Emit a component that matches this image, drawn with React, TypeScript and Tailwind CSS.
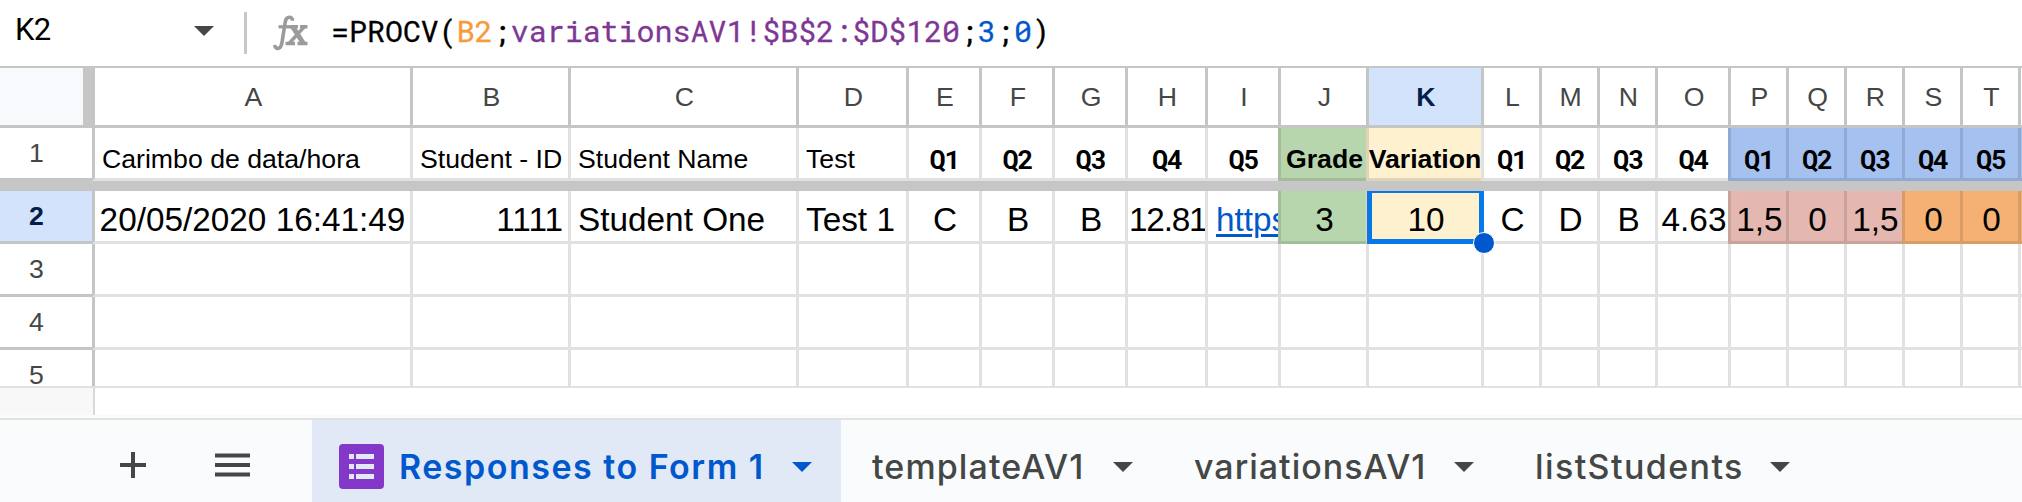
import React from "react";

type Cell = { t?: string; bg?: string; cls?: string };

const COLS = "grid grid-cols-[318px_158px_228px_110px_73px_73px_73px_80px_73px_88px_115px_58px_58px_58px_73px_58px_58px_58px_58px_58px_4px]";
const LETTERS = "ABCDEFGHIJKLMNOPQRST".split("");

const PLAIN = "bg-white border-[#e1e1e1]";
const GREEN = "bg-[#b8d6ae] border-[#a3bc9a]";
const CREAM = "bg-[#fef1d0] border-[#e0d4b8]";
const BLUE = "bg-[#a5c1f0] border-[#91aad4]";
const ROSE = "bg-[#e4b8b0] border-[#c9a29c]";
const ORANGE = "bg-[#f5b174] border-[#d89c67]";

const Q = "justify-center pl-px font-['Roboto_Mono','DejaVu_Sans_Mono',monospace] font-bold text-[22px] tracking-[-1px]";
const LEFT = "pl-[7px]";
const MID = "justify-center pl-0.5";

const row1: Cell[] = [
  { t: "Carimbo de data/hora", cls: LEFT },
  { t: "Student - ID", cls: LEFT },
  { t: "Student Name", cls: LEFT },
  { t: "Test", cls: LEFT },
  { t: "Q1", cls: Q },
  { t: "Q2", cls: Q },
  { t: "Q3", cls: Q },
  { t: "Q4", cls: Q },
  { t: "Q5", cls: Q },
  { t: "Grade", cls: "justify-center pl-0.5 font-bold", bg: GREEN },
  { t: "Variation", cls: "justify-center font-bold", bg: CREAM },
  { t: "Q1", cls: Q },
  { t: "Q2", cls: Q },
  { t: "Q3", cls: Q },
  { t: "Q4", cls: Q },
  { t: "Q1", cls: Q, bg: BLUE },
  { t: "Q2", cls: Q, bg: BLUE },
  { t: "Q3", cls: Q, bg: BLUE },
  { t: "Q4", cls: Q, bg: BLUE },
  { t: "Q5", cls: Q, bg: BLUE },
  { bg: BLUE },
];

const row2: Cell[] = [
  { t: "20/05/2020 16:41:49", cls: "justify-center" },
  { t: "1111", cls: "justify-end pr-[5px]" },
  { t: "Student One", cls: LEFT },
  { t: "Test 1", cls: LEFT },
  { t: "C", cls: MID },
  { t: "B", cls: MID },
  { t: "B", cls: MID },
  { t: "12.81", cls: "pl-px tracking-[-1.2px]" },
  { t: "https", cls: "pl-2 text-[#0058cc] underline decoration-[3px] underline-offset-[3px]" },
  { t: "3", cls: MID, bg: GREEN },
  { t: "10", cls: MID, bg: CREAM },
  { t: "C", cls: MID },
  { t: "D", cls: MID },
  { t: "B", cls: MID },
  { t: "4.63", cls: MID },
  { t: "1,5", cls: MID, bg: ROSE },
  { t: "0", cls: MID, bg: ROSE },
  { t: "1,5", cls: MID, bg: ROSE },
  { t: "0", cls: MID, bg: ORANGE },
  { t: "0", cls: MID, bg: ORANGE },
  { bg: ORANGE },
];

const blank: Cell[] = Array.from({ length: 21 }, () => ({}));

function Row({ n, cells, height, text = "", selected = false }: { n: string; cells: Cell[]; height: string; text?: string; selected?: boolean }) {
  return (
    <div className={`flex overflow-hidden ${height}`}>
      <div className={`h-[53px] w-[92px] shrink-0 border-b-[3px] border-[#c4c5c5] pr-[19px] text-center text-[26.67px] leading-[51px] ${selected ? "bg-[#d4e3fc] font-bold text-[#041e49]" : "bg-white text-[#444746]"}`}>
        {n}
      </div>
      <div className={COLS}>
        {cells.map((c, i) => (
          <div key={i} className={`relative flex h-[53px] min-w-0 items-end overflow-hidden whitespace-nowrap border-b-[3px] border-l-[3px] ${i === 0 ? "bg-white border-b-[#e1e1e1] border-l-[#c4c5c5]" : c.bg ?? PLAIN} ${text} ${c.cls ?? ""}`}>
            {c.t}
          </div>
        ))}
      </div>
    </div>
  );
}

function Caret({ className }: { className: string }) {
  return (
    <svg viewBox="0 0 20 10" className={`h-[10px] w-5 shrink-0 ${className}`} fill="currentColor">
      <path d="M0 0h20L10 10z" />
    </svg>
  );
}

function FormulaBar() {
  return (
    <div className="flex h-[66px] items-start bg-white text-black">
      <div className="w-[178px] pl-[15px] pt-[12px] font-[Roboto] text-[31px] leading-9 tracking-[-0.8px]">K2</div>
      <Caret className="ml-4 mt-[26px] text-[#444746]" />
      <div className="ml-[30px] mt-3 h-[42px] w-[3px] bg-[#c7c7c7]" />
      <svg viewBox="0 0 35 36" className="ml-[26px] mt-[15px] h-9 w-[35px]" fill="none" stroke="#9a9c9b">
        <path d="M19.500 5.800C19.500 1 13.500 0.800 12.300 6.500L8.800 28.500C7.800 34.500 2.200 35 1.700 30" strokeWidth="3.6" />
        <path d="M5.500 11.800H17.500" strokeWidth="3.2" />
        <path d="M16.500 11.800h8.500M27 11.800h7.500M12.500 28.500h9.500M24.500 28.500h10" strokeWidth="3.4" />
        <path d="M19.500 11.500L30.500 28.500" strokeWidth="5" />
        <path d="M31.500 11.500L16 28.500" strokeWidth="3.4" />
      </svg>
      <div className="ml-[23px] whitespace-pre pt-[13px] font-['Roboto_Mono','Liberation_Mono',monospace] text-[30px] leading-9 tracking-[-0.03px] [-webkit-text-stroke:0.3px_currentColor]">
        =PROCV(<span className="text-[#f79a3a]">B2</span>;<span className="text-[#7e3794]">variationsAV1!$B$2:$D$120</span>;<span className="text-[#0058cc]">3</span>;<span className="text-[#0058cc]">0</span>)
      </div>
    </div>
  );
}

function ColumnHeaders() {
  return (
    <div className="flex h-[62px] border-b-[3px] border-t-2 border-[#c4c5c5] text-[26.67px] leading-[58px] text-[#444746]">
      <div className="w-[92px] shrink-0 border-r-[9px] border-[#c6c6c6] bg-[#f8f9fc]" />
      <div className={COLS}>
        {LETTERS.map((l) => (
          <div key={l} className={`h-[57px] border-l-[3px] border-[#c4c5c5] pl-0.5 text-center ${l === "K" ? "bg-[#d4e3fc] font-bold text-[#041e49]" : "bg-white"}`}>
            {l}
          </div>
        ))}
        <div className="border-l-[3px] border-[#c4c5c5] bg-white" />
      </div>
    </div>
  );
}

function SheetTabs() {
  return (
    <div className="flex h-[82px] items-stretch bg-[#f9fbfd] font-['Inter',sans-serif] text-[34px] font-medium leading-[93px] text-[#444746]">
      <div className="flex w-[312px] items-start">
        <svg viewBox="0 0 26 26" className="ml-[120px] mt-8 size-[26px]" fill="#444746">
          <path d="M11 0h4v11h11v4H15v11h-4V15H0v-4h11z" />
        </svg>
        <svg viewBox="0 0 35 24" className="ml-[69px] mt-[33px] h-6 w-[35px]" fill="#444746">
          <path d="M0 0.500h35v4H0zM0 10h35v4H0zM0 19.500h35v4H0z" />
        </svg>
      </div>
      <div className="flex w-[529px] items-start bg-[#e1e9f7] font-semibold text-[#0058cc]">
        <svg viewBox="0 0 45 45" className="ml-[27px] mt-6 size-[45px]">
          <rect width="45" height="45" rx="4" fill="#8338c9" />
          <path fill="#e1e9f7" d="M10 10h5v5h-5zM17 10h18v5H17zM10 20h5v5h-5zM17 20h18v5H17zM10 30h5v5h-5zM17 30h18v5H17z" />
        </svg>
        <span className="ml-[15px] w-[393px] whitespace-nowrap tracking-[1.5px]">Responses to Form 1</span>
        <Caret className="mt-[42px]" />
      </div>
      <div className="flex items-start">
        <span className="ml-[31px] w-[241px] tracking-[1.1px]">templateAV1</span>
        <Caret className="mt-[42px]" />
        <span className="ml-[61px] w-[260px] tracking-[1px]">variationsAV1</span>
        <Caret className="mt-[42px]" />
        <span className="ml-[61px] w-[235px] tracking-[1.4px]">listStudents</span>
        <Caret className="mt-[42px]" />
      </div>
    </div>
  );
}

export default function App() {
  return (
    <div className="h-[502px] w-[2022px] overflow-hidden bg-white font-['Liberation_Sans',Arial,sans-serif]">
      <FormulaBar />
      <ColumnHeaders />
      <Row n="1" cells={row1} height="h-[53px]" text="pb-[4px] text-[26.67px] leading-[30px]" />
      <div className="h-[10px] bg-[#c6c6c6]" />
      <div className="relative">
        <Row n="2" cells={row2} height="h-[53px]" text="pb-[2px] text-[33.33px] leading-[38px]" selected />
        <div className="absolute left-[1367px] top-0 h-[53px] w-[117px] border-[5px] border-t-2 border-[#0877e8]" />
        <div className="absolute left-[1473px] top-[41px] z-10 size-[22px] rounded-full border border-white bg-[#0058cc]" />
      </div>
      <Row n="3" cells={blank} height="h-[53px]" />
      <Row n="4" cells={blank} height="h-[53px]" />
      <Row n="5" cells={blank} height="h-[36px]" />
      <div className="h-[29px] border-t-2 border-[#e1e1e1]">
        <div className="h-full w-[95px] border-r-2 border-[#d9d9d9] bg-[#f8f8f8]" />
      </div>
      <div className="h-[5px] border-b-2 border-[#e1e3de] bg-[#fafbfb]" />
      <SheetTabs />
    </div>
  );
}
